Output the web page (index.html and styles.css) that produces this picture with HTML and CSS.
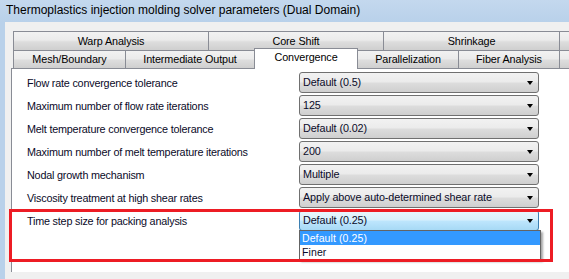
FILE: index.html
```html
<html>
   <head>
      <title>Solver parameters</title>
      <meta charset="utf-8">
      <link rel="stylesheet" href="styles.css">
   </head>

   <body>
      <div class="window">
         <div class="titlebar">Thermoplastics injection molding solver parameters (Dual Domain)</div>
         <div class="client">
            <div class="tabs">
               <div class="tabrow">
                  <div class="tab w195">Warp Analysis</div>
                  <div class="tab w175">Core Shift</div>
                  <div class="tab w176">Shrinkage</div>
                  <div class="tab rest"></div>
               </div>
               <div class="tabrow">
                  <div class="tab w112">Mesh/Boundary</div>
                  <div class="tab w129">Intermediate Output</div>
                  <div class="tab w104 active">Convergence</div>
                  <div class="tab w100">Parallelization</div>
                  <div class="tab w101">Fiber Analysis</div>
                  <div class="tab rest"></div>
               </div>
            </div>
            <div class="panel">
               <div class="row">
                  <div class="label">Flow rate convergence tolerance</div>
                  <div class="combo">Default (0.5)<span class="arrow"></span></div>
               </div>
               <div class="row">
                  <div class="label">Maximum number of flow rate iterations</div>
                  <div class="combo">125<span class="arrow"></span></div>
               </div>
               <div class="row">
                  <div class="label">Melt temperature convergence tolerance</div>
                  <div class="combo">Default (0.02)<span class="arrow"></span></div>
               </div>
               <div class="row">
                  <div class="label">Maximum number of melt temperature iterations</div>
                  <div class="combo">200<span class="arrow"></span></div>
               </div>
               <div class="row">
                  <div class="label">Nodal growth mechanism</div>
                  <div class="combo">Multiple<span class="arrow"></span></div>
               </div>
               <div class="row">
                  <div class="label">Viscosity treatment at high shear rates</div>
                  <div class="combo">Apply above auto-determined shear rate<span class="arrow"></span></div>
               </div>
               <div class="row">
                  <div class="label">Time step size for packing analysis</div>
                  <div class="combo open">Default (0.25)<span class="arrow"></span>
                     <div class="droplist">
                        <div class="item selected">Default (0.25)</div>
                        <div class="item">Finer</div>
                     </div>
                  </div>
               </div>
            </div>
         </div>
         <div class="highlight"></div>
      </div>
   </body>
</html>
```
FILE: styles.css
```css
body {margin: 0; background: #fff;}
.window {position: relative; width: 569px; height: 279px; overflow: hidden; background: linear-gradient(#c4d8ee, #b9d1ea 22px); font-family: "Liberation Sans", Arial, sans-serif; font-size: 12px; color: #000;}
.titlebar {height: 22px; line-height: 21px; padding-left: 6px; font-size: 12px; color: #000;}
.client {margin-left: 5px; height: 257px; background: #f0f0f0; padding-top: 9px; box-sizing: border-box;}
.tabs {margin-left: 8px;}
.tabrow {display: flex; width: 700px;}
.tab {box-sizing: border-box; height: 19px; border: 1px solid #898c95; border-right: none; border-bottom: none; background: linear-gradient(#f2f2f2, #ebebeb 45%, #dddddd 55%, #cfcfcf); text-align: center; line-height: 18px; font-size: 10.8px; letter-spacing: -0.1px;}
.tabrow + .tabrow .tab {height: 18px; line-height: 17px;}
.tab.rest {flex: 1;}
.tabrow .tab.active {height: 21px; margin-top: -2px; margin-bottom: -1px; background: #fff; border-right: 1px solid #898c95; line-height: 17px; position: relative; z-index: 2;}
.w195 {width: 195px;} .w175 {width: 175px;} .w176 {width: 176px;}
.w112 {width: 112px;} .w129 {width: 129px;} .w104 {width: 104px;} .w100 {width: 100px;} .w101 {width: 101px;}
.tab.active + .tab {border-left: none;}
.panel {margin-left: 6px; height: 200px; background: #fff; border-left: 1px solid #898c95; border-top: 1px solid #898c95; padding: 3px 0 0 15px; display: flex; flex-direction: column; gap: 2px;}
.row {display: flex; align-items: center; height: 21px;}
.label {width: 272px; font-size: 10.8px; letter-spacing: -0.2px; color: #0a0a28;}
.combo {position: relative; box-sizing: border-box; width: 240px; height: 21px; border: 1px solid #707070; border-radius: 3px; background: linear-gradient(#f2f2f2, #ebebeb 48%, #dddddd 52%, #cfcfcf); padding-left: 3px; line-height: 19px; font-size: 10.8px; letter-spacing: -0.1px; color: #0a0a28;}
.combo.open {border-color: #3c7fb1; background: linear-gradient(#eaf6fd, #d9f0fc 48%, #bee6fd 52%, #a7d9f5);}
.arrow {position: absolute; right: 5px; top: 8px; width: 0; height: 0; border-left: 3.5px solid transparent; border-right: 3.5px solid transparent; border-top: 4px solid #000;}
.droplist {position: absolute; left: -1px; top: 19px; width: 240px; background: #fff; border: 1px solid #646464; box-shadow: 2px 2px 2px rgba(0,0,0,0.35); z-index: 3;}
.item {height: 14px; line-height: 14px; padding-left: 2px; font-size: 10.5px; letter-spacing: 0.1px;}
.item.selected {background: #3399ff; color: #fff;}
.highlight {position: absolute; left: 9px; top: 209px; width: 544px; height: 53px; box-sizing: border-box; border: 3px solid #ed1c24; z-index: 4;}
```
